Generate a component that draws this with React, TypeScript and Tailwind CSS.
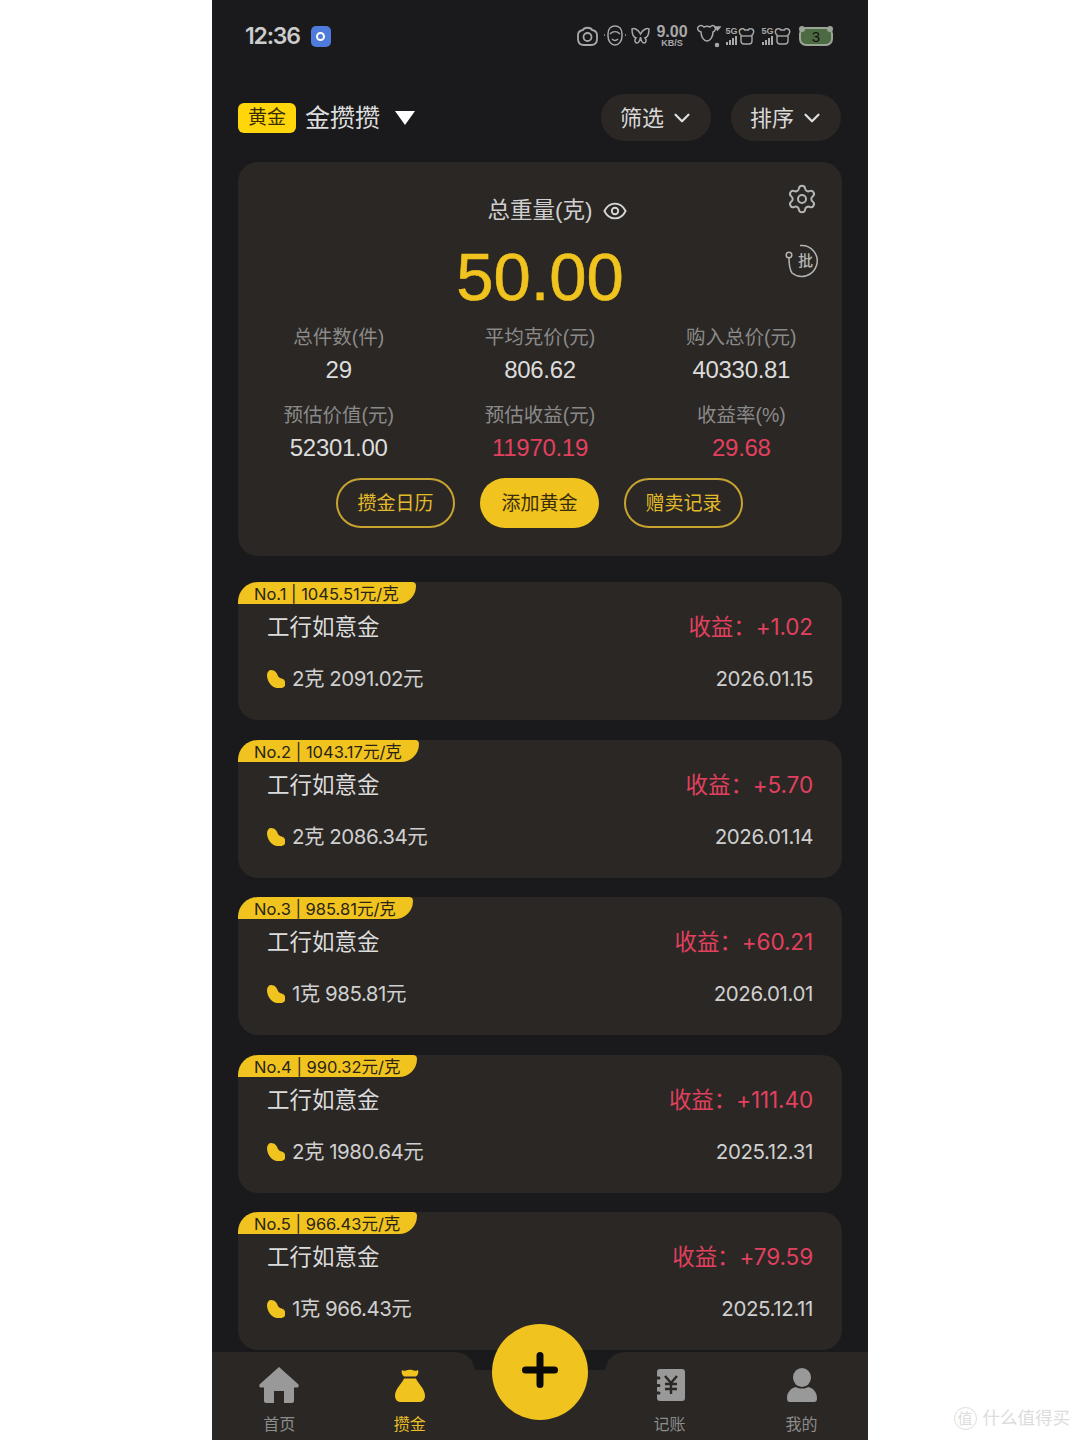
import { ChevronDown, Settings } from "lucide-react"

const font = { fontFamily: '"Liberation Sans", "Noto Sans CJK SC", sans-serif' }
// list rows use a font whose 1 is narrow
const listFont = { fontFamily: 'Inter, "Noto Sans CJK SC", sans-serif' }

const stats = [
  { label: "总件数(件)", value: "29" },
  { label: "平均克价(元)", value: "806.62" },
  { label: "购入总价(元)", value: "40330.81" },
  { label: "预估价值(元)", value: "52301.00" },
  { label: "预估收益(元)", value: "11970.19", red: true },
  { label: "收益率(%)", value: "29.68", red: true },
]

const records = [
  { tag: "No.1 | 1045.51元/克", profit: "+1.02", amount: "2克 2091.02元", date: "2026.01.15" },
  { tag: "No.2 | 1043.17元/克", profit: "+5.70", amount: "2克 2086.34元", date: "2026.01.14" },
  { tag: "No.3 | 985.81元/克", profit: "+60.21", amount: "1克 985.81元", date: "2026.01.01" },
  { tag: "No.4 | 990.32元/克", profit: "+111.40", amount: "2克 1980.64元", date: "2025.12.31" },
  { tag: "No.5 | 966.43元/克", profit: "+79.59", amount: "1克 966.43元", date: "2025.12.11" },
]

function BearFrame() {
  return (
    <svg width="17" height="19" viewBox="0 0 17 19" fill="none" stroke="currentColor" strokeWidth="1.400">
      <path d="M3 2c2-1 3 0 3.500 1h4C11 2 12 1 14 2c2 1 2 3 1 5l-1 1v6c0 2-1 3-3 3H6c-2 0-3-1-3-3V8L2 7C1 5 1 3 3 2z" />
      <path d="M3 9h11" />
    </svg>
  )
}

function StatusIcons() {
  return (
    <div className="flex items-center text-[#a8a8a8]">
      <svg width="21" height="20" viewBox="0 0 21 20" fill="none" stroke="currentColor" strokeWidth="1.800">
        <path d="M6 4c1-3 8-3 9 0 3 .5 5 2 5 5v4c0 4-2 6-6 6H7c-4 0-6-2-6-6V9c0-3 2-4.500 5-5z" />
        <circle cx="10.500" cy="11" r="4" />
      </svg>
      <svg className="ml-[5px]" width="24" height="22" viewBox="0 0 24 22" fill="none" stroke="currentColor" strokeWidth="1.500">
        <path d="M5 9c0-5 3-8 7-8s7 3 7 8v2c0 5-3 9-7 9s-7-4-7-9z" />
        <path d="M7 9c3-3 7-3 10 0M9 14c2 2 4 2 6 0M1 10h1M22 10h1" />
      </svg>
      <svg className="ml-[4px]" width="19" height="18" viewBox="0 0 19 18" fill="none" stroke="currentColor" strokeWidth="1.500">
        <path d="M9.500 7C7 2 3 1 1 2c0 5 1 8 4 9-2 2-1 5 1 5 2 0 3-3 3.500-6 .5 3 1.500 6 3.500 6 2 0 3-3 1-5 3-1 4-4 4-9-2-1-6 0-8.500 5z" />
      </svg>
      <div className="ml-[6px] flex w-[32px] flex-col items-center font-bold">
        <span className="text-[16px] leading-[14px]">9.00</span>
        <span className="text-[9px] leading-[9px]">KB/S</span>
      </div>
      <svg className="ml-[7px]" width="26" height="24" viewBox="0 0 26 24" fill="none" stroke="currentColor" strokeWidth="1.500">
        <path d="M3 3c2-2 4-2 6 0 2-1 4-1 6 0 2-2 4-2 5 0 1 2 0 4-2 5 0 5-3 9-6 9s-6-4-6-9C3 7 2 5 3 3z" />
        <circle cx="22" cy="21" r="1.500" fill="currentColor" />
        <path d="M20 3h5l-2.500 3z" fill="currentColor" />
      </svg>
      {[0, 1].map((n) => (
        <div key={n} className={n ? "ml-[6px] flex items-center" : "ml-[4px] flex items-center"}>
          <div className="flex w-[13px] flex-col items-center font-bold">
            <span className="text-[9px] leading-[9px]">5G</span>
            <svg width="11" height="9" viewBox="0 0 11 9" fill="currentColor">
              <path d="M0 6h2v3H0zM3 4h2v5H3zM6 2h2v7H6zM9 0h2v9H9z" />
            </svg>
          </div>
          <BearFrame />
        </div>
      ))}
      <div className="relative ml-[8px] flex h-[19px] w-[34px] items-center justify-center rounded-[7px] border-2 border-[#9aa596] bg-[#4d6b43] text-[15px] leading-none text-[#111]">
        3
        <span className="absolute -top-[3px] -left-[2px] h-[6px] w-[6px] rounded-full bg-[#9aa596]" />
        <span className="absolute -top-[3px] -right-[2px] h-[6px] w-[6px] rounded-full bg-[#9aa596]" />
      </div>
    </div>
  )
}

function HomeIcon() {
  return (
    <svg width="40" height="36" viewBox="0 0 40 36" fill="#999999">
      <path d="M20 0 39 17c1.500 1.500.5 3.500-1 3.500h-3V34a2 2 0 0 1-2 2h-8V24h-10v12H7a2 2 0 0 1-2-2V20.500H2c-1.500 0-2.500-2-1-3.500z" />
    </svg>
  )
}

function BagIcon() {
  return (
    <svg width="30" height="33" viewBox="0 0 30 33" fill="#f0c31e">
      <path d="M7 1c2 1 3 1 4 .5 2-1 6-1 8 0 1 .5 2 .5 4-.5 1 2 0 5-2 6.500H9C7 6 6 3 7 1z" />
      <path d="M9 9.500h12c1 4 9 10 9 17 0 4-2 6.500-6 6.500H6c-4 0-6-2.500-6-6.500 0-7 8-13 9-17z" />
    </svg>
  )
}

function LedgerIcon() {
  return (
    <svg width="30" height="32" viewBox="0 0 30 32">
      <path fill="#999999" d="M5 0h22a3 3 0 0 1 3 3v26a3 3 0 0 1-3 3H5a3 3 0 0 1-3-3v-3.500h2a1.500 1.500 0 0 0 0-3H2V18h2a1.500 1.500 0 0 0 0-3H2v-4.500h2a1.500 1.500 0 0 0 0-3H2V3a3 3 0 0 1 3-3z" />
      <path fill="none" stroke="#2a2724" strokeWidth="2.400" d="M10 7l6 7 6-7M16 14v11M10 15h12M10 20h12" />
    </svg>
  )
}

function PersonIcon() {
  return (
    <svg width="30" height="34" viewBox="0 0 30 34" fill="#999999">
      <ellipse cx="15" cy="9.500" rx="9" ry="9.500" />
      <path d="M9 19c3 2 9 2 12 0 5 1 9 5 9 11 0 3-1 4-3 4H3c-2 0-3-1-3-4 0-6 4-10 9-11z" />
    </svg>
  )
}

function Tab({ label, active, children }: { label: string; active?: boolean; children: React.ReactNode }) {
  return (
    <div className="flex w-[131px] flex-col items-center">
      <div className="flex h-[36px] items-center justify-center">{children}</div>
      <span className={`mt-[10px] text-[16px] leading-[24px] ${active ? "text-[#e8bf28]" : "text-[#8c8c8c]"}`}>{label}</span>
    </div>
  )
}

function RecordCard({ tag, profit, amount, date }: (typeof records)[number]) {
  return (
    <div className="h-[138px] rounded-[20px] bg-[#2a2724]" style={listFont}>
      <div className="inline-block h-[22px] rounded-tl-[20px] rounded-tr-[4px] rounded-br-[18px] bg-[#f0c31e] pr-[17px] pl-[16px] text-[16.500px] leading-[24px] text-[#2a2416]">
        {tag}
      </div>
      <div className="mt-[6px] flex items-center justify-between pr-[29px] pl-[29px]">
        <span className="text-[22.500px] leading-[30px] text-[#dcdcdc]">工行如意金</span>
        <span className="text-[22.500px] leading-[30px] tracking-[-0.1px] text-[#e2405f]">收益：{profit}</span>
      </div>
      <div className="mt-[22px] flex items-center justify-between pr-[29px] pl-[29px]">
        <div className="flex items-center">
          <svg width="18" height="18" viewBox="0 0 18 18" fill="#f0c31e">
            <path d="M4 0c4 0 6 3 7 6 1 2 3 2 5 3 3 2 3 6 1 8-3 2-9 2-13-2C1 12 0 8 0 5c0-3 2-5 4-5z" />
          </svg>
          <span className="ml-[7px] text-[20.500px] leading-[30px] tracking-[-0.5px] text-[#cfcfcf]">{amount}</span>
        </div>
        <span className="text-[20.500px] leading-[30px] tracking-[-0.4px] text-[#cfcfcf]">{date}</span>
      </div>
    </div>
  )
}

export default function App() {
  return (
    <div className="relative flex h-[1440px] justify-center overflow-hidden bg-white" style={font}>
      <div className="flex h-[1440px] w-[656px] flex-col bg-[#1a1a1c]">
        {/* status bar */}
        <div className="flex h-[72px] shrink-0 items-center justify-between pr-[35px] pl-[33px]">
          <div className="flex items-center">
            <span className="text-[23px] font-semibold tracking-[-1.200px] text-[#cccccc]" style={listFont}>12:36</span>
            <div className="ml-[11px] flex h-[21px] w-[20px] items-center justify-center rounded-[5px] bg-[#4f7bdc]">
              <div className="h-[9px] w-[9px] rounded-full border-2 border-white" />
            </div>
          </div>
          <StatusIcons />
        </div>

        {/* header */}
        <div className="mt-[22px] flex h-[47px] shrink-0 items-center justify-between pr-[27px] pl-[26px]">
          <div className="flex items-center">
            <div className="flex h-[30px] w-[58px] items-center justify-center rounded-[6px] bg-[#ffd60a] pt-[2px] text-[19px] text-[#3a2e00]">黄金</div>
            <span className="ml-[9px] pt-[2px] text-[25px] text-[#dddddd]">金攒攒</span>
            <div className="ml-[15px] h-0 w-0 border-x-[10px] border-t-[14px] border-x-transparent border-t-white" />
          </div>
          <div className="flex gap-[20px]">
            {["筛选", "排序"].map((name) => (
              <div key={name} className="flex h-[47px] w-[110px] items-center gap-[5px] rounded-full bg-[#2a2724] pt-[1px] pl-[19px] text-[22px] text-[#d8d8d8]">
                {name}
                <ChevronDown size={26} strokeWidth={2} className="text-[#e0e0e0]" />
              </div>
            ))}
          </div>
        </div>

        {/* summary */}
        <div className="relative mx-[26px] mt-[21px] h-[394px] shrink-0 rounded-[20px] bg-[#2a2724] pt-[34px]">
          <Settings size={32} strokeWidth={1.500} className="absolute top-[21px] right-[24px] text-[#b5b5b5]" />
          <svg className="absolute top-[82px] right-[23px]" width="34" height="34" viewBox="0 0 34 34" fill="none" stroke="#b5b5b5" strokeWidth="1.500">
            <path d="M15 1.500A15.500 15.500 0 1 1 7 29c-2-3-3-7-3-15" />
            <circle cx="4" cy="11" r="2.800" />
          </svg>
          <span className="absolute top-[88px] right-[29px] text-[15px] leading-[22px] font-medium text-[#b5b5b5]">批</span>
          <div className="flex h-[30px] items-center justify-center">
            <span className="relative text-[22.500px] leading-[30px] text-[#cfcfcf]">
              总重量(克)
              <svg className="absolute top-[5px] -right-[34px]" width="24" height="20" viewBox="0 0 26 20" fill="none" stroke="#d8d8d8" strokeWidth="2">
                <path d="M1.500 10C4 5 8 2 13 2s9 3 11.500 8C22 15 18 18 13 18S4 15 1.500 10z" />
                <circle cx="13" cy="10" r="3.500" />
              </svg>
            </span>
          </div>
          <div className="mt-[18px] text-center text-[67px] leading-[66px] text-[#f0c31e] [-webkit-text-stroke:0.6px_#f0c31e]">50.00</div>
          <div className="mt-[12px] grid grid-cols-3 gap-y-[15px]">
            {stats.map((item) => (
              <div key={item.label} className="flex flex-col items-center gap-[3px]">
                <span className="text-[19.500px] leading-[30px] text-[#8a8a8a]">{item.label}</span>
                <span className={`text-[24px] leading-[30px] tracking-[-0.3px] ${item.red ? "text-[#e2405f]" : "text-[#dcdcdc]"}`}>{item.value}</span>
              </div>
            ))}
          </div>
          <div className="mt-[15px] flex justify-center gap-[25px] pr-[1px]">
            <div className="flex h-[50px] w-[119px] items-center justify-center rounded-full border-2 border-[#c7a32f] pt-[2px] text-[19px] text-[#e3bb2a]">攒金日历</div>
            <div className="flex h-[50px] w-[119px] items-center justify-center rounded-full bg-[#f0c31e] pt-[2px] text-[19px] text-[#3a2e0a]">添加黄金</div>
            <div className="flex h-[50px] w-[119px] items-center justify-center rounded-full border-2 border-[#c7a32f] pt-[2px] text-[19px] text-[#e3bb2a]">赠卖记录</div>
          </div>
        </div>

        {/* records */}
        <div className="mx-[26px] mt-[26px] flex shrink-0 flex-col gap-[19.5px]">
          {records.map((record) => (
            <RecordCard key={record.tag} {...record} />
          ))}
        </div>

        {/* bottom nav */}
        <div className="relative mt-[2px] flex h-[88px] shrink-0">
          <div className="flex w-[263px] rounded-tr-[20px] bg-[#2a2724] pt-[15px] pl-[2px]">
            <Tab label="首页"><HomeIcon /></Tab>
            <Tab label="攒金" active><BagIcon /></Tab>
          </div>
          <div className="mt-[18px] flex-1 bg-[#2a2724]" />
          <div className="flex w-[263px] rounded-tl-[20px] bg-[#2a2724] pt-[15px]">
            <div className="-ml-[1px] flex gap-[1px]">
              <Tab label="记账"><LedgerIcon /></Tab>
              <Tab label="我的"><PersonIcon /></Tab>
            </div>
          </div>
          <div className="absolute -top-[28px] left-[280px] flex h-[96px] w-[96px] items-center justify-center rounded-full bg-[#f0c31e] pb-[4px]">
            <svg width="36" height="36" viewBox="0 0 36 36" stroke="#0a0a0a" strokeWidth="7" strokeLinecap="round">
              <path d="M18 3.500v29M3.500 18h29" />
            </svg>
          </div>
        </div>
      </div>

      {/* watermark */}
      <div className="absolute right-[10px] bottom-[10px] flex items-center text-[#dcdcdc]">
        <div className="flex h-[23px] w-[23px] items-center justify-center rounded-full border border-[#dcdcdc] text-[15px] leading-none">值</div>
        <span className="ml-[6px] text-[17.500px] leading-[24px]">什么值得买</span>
      </div>
    </div>
  )
}
